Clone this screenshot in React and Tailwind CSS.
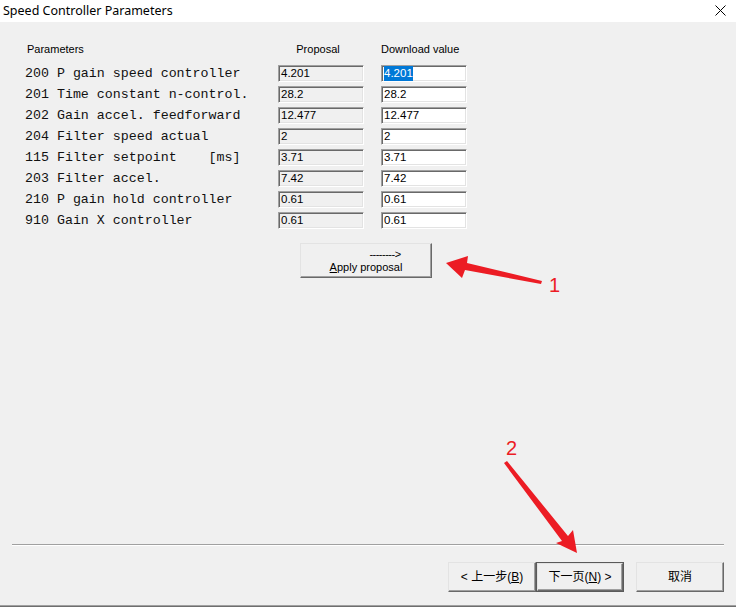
import React from "react";

const rows = [
  { label: "200 P gain speed controller", proposal: "4.201", value: "4.201", selected: true },
  { label: "201 Time constant n-control.", proposal: "28.2", value: "28.2" },
  { label: "202 Gain accel. feedforward", proposal: "12.477", value: "12.477" },
  { label: "204 Filter speed actual", proposal: "2", value: "2" },
  { label: "115 Filter setpoint    [ms]", proposal: "3.71", value: "3.71" },
  { label: "203 Filter accel.", proposal: "7.42", value: "7.42" },
  { label: "210 P gain hold controller", proposal: "0.61", value: "0.61" },
  { label: "910 Gain X controller", proposal: "0.61", value: "0.61" },
];

const sans = { fontFamily: '"Liberation Sans", Arial, sans-serif' };
const cjk = { fontFamily: '"Liberation Sans", "Noto Sans CJK SC", sans-serif' };

function Field({ children, white }) {
  return (
    <div
      className={`flex h-[17px] w-[86px] items-center border border-t-[#a0a0a0] border-l-[#a0a0a0] border-b-white border-r-white pl-[2px] text-[11.5px] leading-none text-black shadow-[inset_1px_1px_0_#696969,inset_-1px_-1px_0_#e3e3e3] ${
        white ? "bg-white" : "bg-[#f0f0f0]"
      }`}
      style={sans}
    >
      {children}
    </div>
  );
}

function WinButton({ children, isDefault, className = "" }) {
  return (
    <div
      className={`flex h-[30px] w-[88px] items-center justify-center text-[12px] text-black ${
        isDefault ? "border border-[#5a5a5a]" : ""
      } ${className}`}
      style={cjk}
    >
      <div className="flex h-full w-full items-center justify-center border border-t-[#e3e3e3] border-l-[#e3e3e3] border-r-[#696969] border-b-[#696969] bg-[#f0f0f0] shadow-[inset_-1px_-1px_0_#a0a0a0]">
        {children}
      </div>
    </div>
  );
}

export default function App() {
  return (
    <div className="relative flex h-[607px] w-[736px] flex-col overflow-hidden bg-[#f0f0f0]">
      {/* Title bar */}
      <div className="flex h-[22px] items-center justify-between bg-white pl-[3px] pr-[10px]">
        <span className="text-[12.5px] text-black" style={{ fontFamily: '"Noto Sans", "Open Sans", sans-serif' }}>
          Speed Controller Parameters
        </span>
        <svg width="11" height="11" viewBox="0 0 11 11" className="mt-[-1px]">
          <path d="M0.5 0.5 L10.5 10.5 M10.5 0.5 L0.5 10.5" stroke="#000" strokeWidth="1" />
        </svg>
      </div>

      {/* Parameter table */}
      <div className="pl-[25px] pt-[20px]">
        <div className="flex h-[14px] items-center text-[11px] text-black" style={sans}>
          <span className="w-[253px] pl-[2px]">Parameters</span>
          <span className="w-[80px] text-center">Proposal</span>
          <span className="ml-[23px]">Download value</span>
        </div>

        <div className="mt-[9px] flex flex-col gap-[4px]">
          {rows.map((r) => (
            <div key={r.label} className="flex items-center">
              <span
                className="w-[253px] whitespace-pre text-[13.3px] leading-none text-[#111]"
                style={{ fontFamily: '"Liberation Mono", "Courier New", monospace' }}
              >
                {r.label}
              </span>
              <Field>{r.proposal}</Field>
              <div className="ml-[17px]">
                <Field white>
                  {r.selected ? <span className="bg-[#0078d7] py-[2px] text-white">{r.value}</span> : r.value}
                </Field>
              </div>
            </div>
          ))}
        </div>

        {/* Apply proposal */}
        <div className="ml-[275px] mt-[14px] flex h-[35px] w-[132px] flex-col items-center justify-center border border-t-[#e3e3e3] border-l-[#e3e3e3] border-r-[#696969] border-b-[#696969] bg-[#f0f0f0] text-[11px] leading-[13px] text-black shadow-[inset_-1px_-1px_0_#a0a0a0]" style={sans}>
          <span className="ml-[38px] tracking-[-0.5px]">--------&gt;</span>
          <span>
            <span className="underline">A</span>pply proposal
          </span>
        </div>
      </div>

      {/* Footer */}
      <div className="mt-auto">
        <div className="mx-[12px] h-[2px] border-t border-[#a0a0a0] bg-white" />
        <div className="mt-[16px] flex pl-[448px]">
          <WinButton className="w-[88px]">&lt;&nbsp;上一步(<span className="underline">B</span>)</WinButton>
          <WinButton isDefault className="w-[88px]">
            下一页(<span className="underline">N</span>)&nbsp;&gt;
          </WinButton>
          <WinButton className="ml-[12px] w-[88px]">取消</WinButton>
        </div>
        <div className="mt-[13px] h-[1px] bg-[#a0a0a0]" />
        <div className="h-[1px] bg-[#6e6e6e]" />
      </div>

      {/* Red annotation arrows */}
      <svg className="pointer-events-none absolute left-0 top-0" width="736" height="607">
        <polygon
          points="446,263 468,256 467,263 542,281 541,284 465,270 462,278"
          fill="#ec1c24"
        />
        <polygon
          points="577,553 573,530 568,536 507,461 504,463 562,541 556,543"
          fill="#ec1c24"
        />
      </svg>
      <span className="absolute left-[549px] top-[270px] text-[20px] text-[#ec1c24]" style={sans}>
        1
      </span>
      <span className="absolute left-[506px] top-[433px] text-[20px] text-[#ec1c24]" style={sans}>
        2
      </span>
    </div>
  );
}
